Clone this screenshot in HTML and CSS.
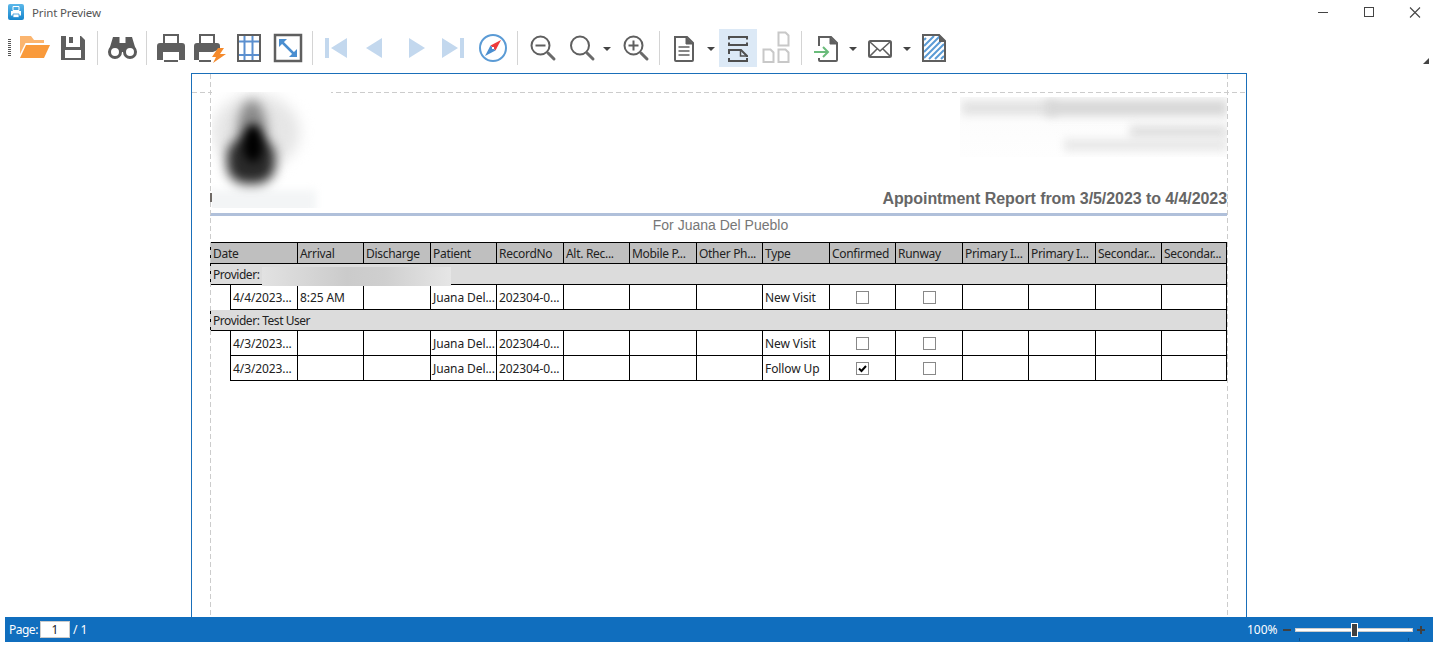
FILE: index.html
```html
<!DOCTYPE html>
<html lang="en">
<head>
<meta charset="utf-8">
<title>Print Preview</title>
<link rel="stylesheet" href="styles.css">
</head>
<body>
<div class="app">
  <header class="titlebar">
    <svg class="app-icon" width="16" height="16" viewBox="0 0 16 16"><defs><linearGradient id="tb" x1="0" y1="0" x2="0" y2="1"><stop offset="0" stop-color="#5bb8ea"/><stop offset="1" stop-color="#1685cc"/></linearGradient></defs><rect width="16" height="16" rx="2" fill="url(#tb)"/><path d="M5 2.500h6v4H5z" fill="none" stroke="#fff"/><path d="M3 7h10v4.500H3z" fill="#fff"/><path d="M5 10h6v3.500H5z" fill="#fff" stroke="#2b92d5" stroke-width=".8"/></svg>
    <span class="title-text">Print Preview</span>
    <div class="win-controls">
      <svg width="46" height="26" viewBox="0 0 46 26"><path d="M20 12.500h10" stroke="#444" fill="none"/></svg>
      <svg width="46" height="26" viewBox="0 0 46 26"><rect x="20.500" y="7.500" width="9" height="9" fill="none" stroke="#444"/></svg>
      <svg width="46" height="26" viewBox="0 0 46 26"><path d="M20 7.500l10 10M30 7.500l-10 10" fill="none" stroke="#444" stroke-width="1.100"/></svg>
    </div>
  </header>

  <nav class="toolbar">
    <div class="grip"></div>
    <svg class="tool" viewBox="0 0 38 38"><path d="M4 7h11l3 4h10v3H9.500L4 25z" fill="#fbb56f"/><path d="M10 16h24l-6 13H4z" fill="#f99a3b"/></svg>
    <svg class="tool" viewBox="0 0 38 38"><path d="M7 7h20l4 4v20H7z" fill="#5f5f5f"/><path d="M12 7h14v11H12z" fill="#fff"/><path d="M15 8h4v6h-4z" fill="#5f5f5f"/><path d="M11 21h16v8H11z" fill="#fff"/></svg>
    <div class="sep"></div>
    <svg class="tool" viewBox="0 0 38 38"><path d="M10 8h6.500v6h6V8H29l4.500 15h-28z" fill="#5a5a5a"/><circle cx="12" cy="23" r="5.500" fill="#fff" stroke="#5a5a5a" stroke-width="3"/><circle cx="27" cy="23" r="5.500" fill="#fff" stroke="#5a5a5a" stroke-width="3"/></svg>
    <div class="sep"></div>
    <svg class="tool" viewBox="0 0 38 38"><path d="M12 14V6h14v8" fill="none" stroke="#5f5f5f" stroke-width="2"/><path d="M8 14h22a3 3 0 0 1 3 3v14h-6v-8H11v8H5V17a3 3 0 0 1 3-3z" fill="#5f5f5f"/><path d="M13 25h12v6H13z" fill="#fff"/><path d="M12 32h14" stroke="#5f5f5f" stroke-width="2"/></svg>
    <svg class="tool" viewBox="0 0 38 38"><path d="M10 14V6h14v8" fill="none" stroke="#5f5f5f" stroke-width="2"/><path d="M7 14h20a3 3 0 0 1 3 3v3l-7 3H9v8H4V17a3 3 0 0 1 3-3z" fill="#5f5f5f"/><path d="M9 32h12" stroke="#5f5f5f" stroke-width="2"/><path d="M28 19l-6 9h4l-3 6 13-9h-6l4-6z" fill="#f58a2c"/></svg>
    <svg class="tool ml2" viewBox="0 0 38 38"><path d="M7 12.500h24M7 26h24M14.500 5v28M22.500 5v28" stroke="#5b8fcf" stroke-width="2" fill="none"/><rect x="8" y="6" width="22" height="26" fill="none" stroke="#5f5f5f" stroke-width="2"/></svg>
    <svg class="tool ml1" viewBox="0 0 38 38"><rect x="6" y="6" width="26" height="26" fill="none" stroke="#5f5f5f" stroke-width="2.500"/><path d="M13 13l12 12" stroke="#4a8ed0" stroke-width="2.500"/><path d="M10 10h8l-8 8zM28 28h-8l8-8z" fill="#4a8ed0"/></svg>
    <div class="sep"></div>
    <svg class="tool" viewBox="0 0 38 38"><path d="M7 9h4v20H7zM29 9v20L13 19z" fill="#c3d8ee"/></svg>
    <svg class="tool" viewBox="0 0 38 38"><path d="M26 9v20L10 19z" fill="#c3d8ee"/></svg>
    <svg class="tool ml3" viewBox="0 0 38 38"><path d="M12 9v20l16-10z" fill="#c3d8ee"/></svg>
    <svg class="tool" viewBox="0 0 38 38"><path d="M7 9v20l16-10zM25 9h4v20h-4z" fill="#c3d8ee"/></svg>
    <svg class="tool ml1" viewBox="0 0 38 38"><circle cx="19" cy="19" r="13" fill="#fff" stroke="#5b9bd5" stroke-width="2"/><path d="M27 11L16.500 16.500 21.500 21.500z" fill="#ee3b3b"/><path d="M11 27L16.500 16.500 21.500 21.500z" fill="#4a8ed0"/><rect x="18" y="18" width="2" height="2" fill="#fff"/></svg>
    <div class="sep"></div>
    <svg class="tool" viewBox="0 0 38 38"><circle cx="17.500" cy="16.500" r="9" fill="none" stroke="#5f5f5f" stroke-width="2"/><path d="M12.500 16.500h10" stroke="#5f5f5f" stroke-width="2"/><path d="M25 24l6 6" stroke="#6a6a6a" stroke-width="3" stroke-linecap="round"/></svg>
    <svg class="tool" viewBox="0 0 38 38"><circle cx="19" cy="16.500" r="9" fill="none" stroke="#5f5f5f" stroke-width="2"/><path d="M26 24l6 6" stroke="#6a6a6a" stroke-width="3" stroke-linecap="round"/></svg>
    <svg class="caret" viewBox="0 0 16 38"><path d="M4 18h8l-4 4z"/></svg>
    <svg class="tool" viewBox="0 0 38 38"><circle cx="18.500" cy="16.500" r="9" fill="none" stroke="#5f5f5f" stroke-width="2"/><path d="M13.500 16.500h10M18.500 11.500v10" stroke="#5f5f5f" stroke-width="2"/><path d="M26 24l6 6" stroke="#6a6a6a" stroke-width="3" stroke-linecap="round"/></svg>
    <div class="sep ml1"></div>
    <svg class="tool" viewBox="0 0 38 38"><path d="M10 8h12l6 6v17a1 1 0 0 1-1 1H11a1 1 0 0 1-1-1z" fill="none" stroke="#5f5f5f" stroke-width="2"/><path d="M21 8v7h7" fill="#5f5f5f" stroke="#5f5f5f"/><path d="M13.500 18h11M13.500 22h11M13.500 26h11" stroke="#5f5f5f" stroke-width="1.600"/></svg>
    <svg class="caret" viewBox="0 0 16 38"><path d="M4 18h8l-4 4z"/></svg>
    <svg class="tool active" viewBox="0 0 38 38"><path d="M10 10.500V8h18v2.500M10 13.500V16h18v-2.500" fill="none" stroke="#4f4f4f" stroke-width="2"/><path d="M10 25v-4h12l6 6v1" fill="none" stroke="#4f4f4f" stroke-width="2"/><path d="M21.500 21v6h6.500" fill="none" stroke="#4f4f4f" stroke-width="1.500"/><path d="M10 29v3h18v-3" fill="none" stroke="#4f4f4f" stroke-width="2"/></svg>
    <svg class="tool" viewBox="0 0 38 38"><path d="M21.500 3.500h7l3 3v10h-10zM6.500 20.500h7l3 3v9.500h-10zM21.500 20.500h7l3 3v9.500h-10z" fill="none" stroke="#c8c8c8" stroke-width="2"/></svg>
    <div class="sep ml1"></div>
    <svg class="tool" viewBox="0 0 38 38"><path d="M12 17V8h12l6 6v17a1 1 0 0 1-1 1H13a1 1 0 0 1-1-1v-2" fill="none" stroke="#5f5f5f" stroke-width="2"/><path d="M23 8v7h7" fill="#5f5f5f" stroke="#5f5f5f"/><path d="M7 23h13M16 18l5 5-5 5" fill="none" stroke="#69bb7a" stroke-width="2"/></svg>
    <svg class="caret" viewBox="0 0 16 38"><path d="M4 18h8l-4 4z"/></svg>
    <svg class="tool" viewBox="0 0 38 38"><rect x="8" y="12" width="22" height="16" rx="1.500" fill="none" stroke="#5f5f5f" stroke-width="2"/><path d="M9 13l10 9 10-9M9 27l7-7M29 27l-7-7" fill="none" stroke="#5f5f5f" stroke-width="1.600"/></svg>
    <svg class="caret" viewBox="0 0 16 38"><path d="M4 18h8l-4 4z"/></svg>
    <svg class="tool" viewBox="0 0 38 38"><path d="M11 9l-2 2M19 7L9 17M25 7L9 23M28 10L9 29M29 15L14 30M29 21L20 30M29 27l-3 3" stroke="#5b9bd5" stroke-width="2" fill="none"/><path d="M8 6h16l6 6v20H8z" fill="none" stroke="#5f5f5f" stroke-width="2"/><path d="M24 5v8h7z" fill="#5f5f5f"/></svg>
    <svg class="corner" width="6" height="6" viewBox="0 0 6 6"><path d="M6 0v6H0z" fill="#444"/></svg>
  </nav>

  <main class="viewer">
    <section class="page">
      <div class="guide guide-top"></div>
      <div class="guide guide-left"></div>
      <div class="guide guide-right"></div>
      <div class="logo-mark"></div>

      <div class="report-head">
        <div class="logo"><div class="blob blob-pale"></div><div class="blob blob-foot"></div><div class="blob blob-upper"></div><div class="blob blob-lower"></div><div class="blob blob-core"></div></div>
        <div class="head-right">
          <div class="redact-address"><div class="smear smear-a"></div><div class="smear smear-a2"></div><div class="smear smear-b"></div><div class="smear smear-c"></div></div>
          <div class="report-title">Appointment Report from 3/5/2023 to 4/4/2023</div>
        </div>
      </div>
      <div class="rule"></div>
      <div class="subtitle">For Juana Del Pueblo</div>

      <div class="grid-row header-row">
        <div class="cell">Date</div><div class="cell">Arrival</div><div class="cell">Discharge</div><div class="cell">Patient</div><div class="cell">RecordNo</div><div class="cell">Alt. Rec...</div><div class="cell">Mobile P...</div><div class="cell">Other Ph...</div><div class="cell">Type</div><div class="cell">Confirmed</div><div class="cell">Runway</div><div class="cell">Primary I...</div><div class="cell">Primary I...</div><div class="cell">Secondar...</div><div class="cell">Secondar...</div>
      </div>
      <div class="group-row">Provider:<div class="redact-name"></div></div>
      <div class="grid-row data-row">
        <div class="cell">4/4/2023...</div><div class="cell">8:25 AM</div><div class="cell"></div><div class="cell">Juana Del...</div><div class="cell">202304-0...</div><div class="cell"></div><div class="cell"></div><div class="cell"></div><div class="cell">New Visit</div><div class="cell center"><span class="check"></span></div><div class="cell center"><span class="check"></span></div><div class="cell"></div><div class="cell"></div><div class="cell"></div><div class="cell"></div>
      </div>
      <div class="group-row">Provider: Test User</div>
      <div class="grid-row data-row">
        <div class="cell">4/3/2023...</div><div class="cell"></div><div class="cell"></div><div class="cell">Juana Del...</div><div class="cell">202304-0...</div><div class="cell"></div><div class="cell"></div><div class="cell"></div><div class="cell">New Visit</div><div class="cell center"><span class="check"></span></div><div class="cell center"><span class="check"></span></div><div class="cell"></div><div class="cell"></div><div class="cell"></div><div class="cell"></div>
      </div>
      <div class="grid-row data-row">
        <div class="cell">4/3/2023...</div><div class="cell"></div><div class="cell"></div><div class="cell">Juana Del...</div><div class="cell">202304-0...</div><div class="cell"></div><div class="cell"></div><div class="cell"></div><div class="cell">Follow Up</div><div class="cell center"><span class="check"><svg width="11" height="11" viewBox="0 0 11 11"><path d="M2 5.500l2.500 2.500L9 3" fill="none" stroke="#000" stroke-width="2"/></svg></span></div><div class="cell center"><span class="check"></span></div><div class="cell"></div><div class="cell"></div><div class="cell"></div><div class="cell"></div>
      </div>
    </section>
  </main>

  <footer class="statusbar">
    <span class="page-label">Page:</span>
    <span class="page-input">1</span>
    <span class="page-total">/ 1</span>
    <span class="zoom-value">100%</span>
    <svg class="zoom-btn" width="8" height="8" viewBox="0 0 8 8"><path d="M0 3h8v2H0z" fill="#404040"/></svg>
    <div class="slider"><div class="thumb"></div><i class="tick tick-a"></i><i class="tick tick-b"></i></div>
    <svg class="zoom-btn" width="8" height="8" viewBox="0 0 8 8"><path d="M0 3h3V0h2v3h3v2H5v3H3V5H0z" fill="#404040"/></svg>
  </footer>
</div>
</body>
</html>
```

FILE: styles.css
```css
* { box-sizing: border-box; }

html, body {
  margin: 0;
  padding: 0;
  background: #fff;
}

.app {
  display: flex;
  flex-direction: column;
  height: 646px;
  padding: 0 3px 4px 5px;
  overflow: hidden;
  font-family: "Noto Sans", sans-serif;
  font-size: 12px;
}

/* Title bar */
.titlebar {
  flex: none;
  display: flex;
  align-items: flex-start;
  height: 26px;
  padding: 4px 0 0 3px;
}
.app-icon { flex: none; }
.title-text {
  margin-left: 8px;
  font-size: 11.5px;
  letter-spacing: -0.15px;
  line-height: 18px;
  color: #555;
}
.win-controls {
  display: flex;
  margin: -4px -3px 0 auto;
}
.win-controls svg { display: block; }

/* Toolbar */
.toolbar {
  flex: none;
  display: flex;
  align-items: flex-start;
  height: 44px;
  padding: 3px 0 0 3px;
}
.grip {
  width: 3px;
  height: 17px;
  margin: 10px 5px 0 0;
  background: repeating-linear-gradient(to bottom, #555 0 1px, #fff 1px 2px);
}
.tool {
  flex: none;
  display: block;
  width: 38px;
  height: 38px;
}
.tool.active { background: #dce9f6; }
.caret {
  flex: none;
  display: block;
  width: 16px;
  height: 38px;
  fill: #444;
}
.sep {
  flex: none;
  width: 1px;
  height: 34px;
  margin: 2px 5px 0;
  background: #d4d4d4;
}
.ml1 { margin-left: 1px; }
.ml2 { margin-left: 2px; }
.ml3 { margin-left: 3px; }
.sep.ml1 { margin-left: 6px; }
.corner {
  flex: none;
  margin: 29px 4px 0 auto;
}

/* Viewer */
.viewer {
  flex: 1;
  min-height: 0;
  overflow: hidden;
  padding-top: 3px;
}
.page {
  position: relative;
  width: 1056px;
  height: 800px;
  margin: 0 auto;
  padding: 18px 19px 0 18px;
  border: 1px solid #1a6fb9;
  background: #fff;
}
.guide {
  position: absolute;
  z-index: 2;
}
.guide-top {
  left: 0;
  right: 0;
  top: 18px;
  height: 1px;
  background: repeating-linear-gradient(to right, #ccc 0 5px, transparent 5px 8px);
}
.guide-left, .guide-right {
  top: 0;
  bottom: 0;
  width: 1px;
  background: repeating-linear-gradient(to bottom, #ccc 0 5px, transparent 5px 8px);
}
.guide-left { left: 18px; }
.guide-right { right: 18px; }
.logo-mark {
  position: absolute;
  z-index: 3;
  left: 18px;
  top: 119px;
  width: 2px;
  height: 9px;
  background: #6f6a66;
}

/* Report header */
.report-head {
  display: flex;
  justify-content: space-between;
  height: 121px;
}
.logo {
  position: relative;
  z-index: 3;
  width: 119px;
  height: 116px;
  margin-left: 2px;
  overflow: hidden;
  background: #fff;
}
.blob {
  position: absolute;
  border-radius: 50%;
}
.blob-pale {
  left: 0;
  top: 2px;
  width: 88px;
  height: 76px;
  background: #e6e6e6;
  filter: blur(7px);
}
.blob-foot {
  left: -6px;
  top: 98px;
  width: 110px;
  height: 24px;
  border-radius: 0;
  background: #f3f5f6;
  filter: blur(4px);
}
.blob-upper {
  left: 25px;
  top: 8px;
  width: 30px;
  height: 66px;
  background: #8a8a8a;
  filter: blur(6px);
}
.blob-lower {
  left: 15px;
  top: 46px;
  width: 48px;
  height: 46px;
  border-radius: 40%;
  background: #2a2a2a;
  filter: blur(6px);
}
.blob-core {
  left: 31px;
  top: 32px;
  width: 20px;
  height: 38px;
  background: #000;
  filter: blur(5px);
}
.head-right {
  display: flex;
  flex-direction: column;
  align-items: flex-end;
  padding-top: 5px;
}
.redact-address {
  position: relative;
  width: 267px;
  height: 60px;
  overflow: hidden;
  background: linear-gradient(to bottom, #fbfbfb, #fefefe);
}
.smear {
  position: absolute;
  filter: blur(4px);
}
.smear-a { left: 2px; width: 95px; top: 4px; height: 14px; background: #e2e2e2; }
.smear-a2 { left: 85px; right: 0; top: 3px; height: 16px; background: #d8d8d8; }
.smear-b { left: 170px; right: 0; top: 28px; height: 14px; background: #e2e2e2; }
.smear-c { left: 104px; right: 0; top: 42px; height: 12px; background: #e8e8e8; }
.report-title {
  margin-top: auto;
  padding-bottom: 5px;
  font-family: "Liberation Sans", Arial, sans-serif;
  font-weight: 700;
  font-size: 16px;
  letter-spacing: -0.07px;
  line-height: 18px;
  color: #666;
  white-space: nowrap;
}
.rule {
  height: 3px;
  background: #b0c0da;
}
.subtitle {
  height: 26px;
  padding-left: 4px;
  font-family: "Liberation Sans", Arial, sans-serif;
  font-size: 14px;
  line-height: 18px;
  text-align: center;
  color: #777;
}

/* Table */
.grid-row {
  display: grid;
  color: #222;
  white-space: nowrap;
}
.header-row {
  grid-template-columns: 87px 66px 67px 66px 67px 66px 67px 66px 67px 66px 67px 66px 67px 66px 65px;
  width: 1017px;
  height: 22px;
  background: #bfbfbf;
  border-top: 1px solid #000;
  border-bottom: 1px solid #000;
  border-left: 1px solid #000;
  line-height: 21px;
  letter-spacing: -0.3px;
}
.data-row {
  grid-template-columns: 67px 66px 67px 66px 67px 66px 67px 66px 67px 66px 67px 66px 67px 66px 65px;
  width: 997px;
  height: 25px;
  margin-left: 20px;
  border-bottom: 1px solid #000;
  border-left: 1px solid #000;
  line-height: 25px;
  letter-spacing: -0.1px;
}
.cell {
  padding-left: 2px;
  overflow: hidden;
  border-right: 1px solid #000;
}
.cell.center {
  display: flex;
  align-items: center;
  justify-content: center;
  padding: 0;
}
.check {
  display: block;
  width: 13px;
  height: 13px;
  border: 1px solid #888;
  background: #fff;
}
.check svg { display: block; }
.group-row {
  position: relative;
  width: 1017px;
  height: 21px;
  padding-left: 2px;
  background: #dcdcdc;
  border-bottom: 1px solid #000;
  border-left: 1px solid #000;
  border-right: 1px solid #000;
  color: #222;
  line-height: 22px;
  letter-spacing: -0.45px;
}
.redact-name {
  position: absolute;
  left: 51px;
  top: 3px;
  width: 189px;
  height: 19px;
  z-index: 1;
  background: linear-gradient(to right, #e2e2e2, #cbcbcb 45%, #cfcfcf 65%, #e6e6e6);
}

/* Status bar */
.statusbar {
  flex: none;
  display: flex;
  align-items: center;
  height: 25px;
  padding-left: 4px;
  background: #106ebe;
  color: #fff;
}
.page-label { width: 31px; letter-spacing: -0.5px; }
.page-input {
  width: 30px;
  height: 17px;
  border: 1px solid #ccc;
  background: #fff;
  color: #222;
  text-align: center;
  line-height: 15px;
}
.page-total { margin-left: 3px; }
.zoom-value {
  margin-left: auto;
  width: 36px;
}
.zoom-btn { flex: none; }
.slider {
  position: relative;
  width: 118px;
  height: 4px;
  margin: 0 4px;
  background: #fff;
  border: 1px solid #ccc;
}
.thumb {
  position: absolute;
  left: 55px;
  top: -6px;
  width: 7px;
  height: 14px;
  background: #404040;
  border: 1px solid #fff;
}
.tick {
  position: absolute;
  top: 9px;
  width: 1px;
  height: 3px;
  background: #0c4f8a;
}
.tick-a { left: 3px; }
.tick-b { right: 3px; }
.statusbar .zoom-btn:last-child { margin-right: 8px; }
```
